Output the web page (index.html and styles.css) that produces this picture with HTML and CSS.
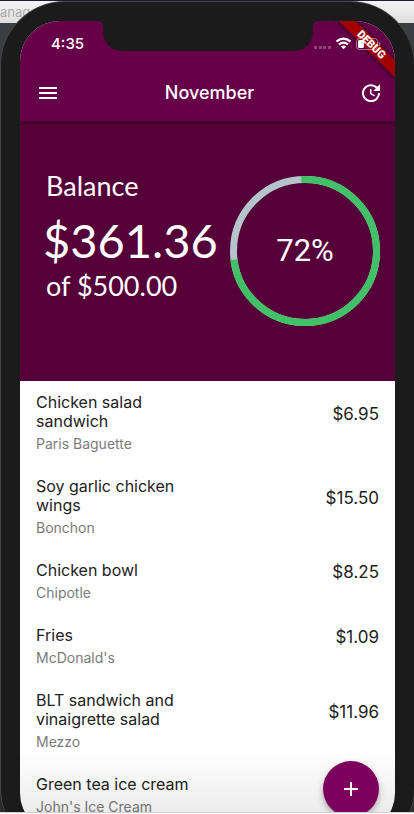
FILE: index.html
```html
<!DOCTYPE html>
<html lang="en">
<head>
<meta charset="utf-8">
<meta name="viewport" content="width=device-width, initial-scale=1">
<title>November</title>
<link rel="stylesheet" href="styles.css">
</head>
<body>
<div class="titlebar">anag</div>
<div class="phone">
  <div class="screen">
    <header class="top">
      <div class="status">
        <time class="clock">4:35</time>
        <svg class="notch" width="220" height="30" viewBox="0 0 220 30" aria-hidden="true"><path d="M0 0H220Q215 0 215 6V10Q214 29 195 30H25Q6 29 5 10V6Q5 0 0 0Z"/></svg>
        <svg class="signals" width="70" height="20" viewBox="0 0 70 20" aria-hidden="true">
          <g fill="#8f4379"><rect x="1" y="11" width="3" height="3"/><rect x="6" y="11" width="3" height="3"/><rect x="10" y="11" width="3" height="3"/><rect x="15" y="11" width="3" height="3"/></g>
          <g fill="none" stroke="#fff" stroke-width="2.2"><path d="M23.5 6.6Q30.500 .6 37.500 6.600"/><path d="M26 9.500Q30.500 5.800 35 9.500"/></g>
          <path d="M27.800 11.500Q30.500 9.500 33.200 11.500L30.500 14.300Z" fill="#fff"/>
          <rect x="43.500" y="3.500" width="21" height="11" rx="3" fill="none" stroke="#fff" stroke-opacity=".45"/><path d="M66.500 7V11" stroke="#a66b95" stroke-width="1.500"/>
          <rect x="45" y="5" width="6" height="8" rx="1.500" fill="#fff"/>
        </svg>
      </div>
      <div class="appbar">
        <button class="icon" aria-label="Menu"><svg width="24" height="24" viewBox="0 0 24 24"><path d="M3 18h18v-2H3v2zm0-5h18v-2H3v2zm0-7v2h18V6H3z"/></svg></button>
        <h1>November</h1>
        <button class="icon" aria-label="Update"><svg width="24" height="24" viewBox="0 0 24 24"><path d="M21 10.120h-6.780l2.740-2.820c-2.730-2.700-7.150-2.800-9.880-.1-2.730 2.710-2.730 7.080 0 9.790s7.150 2.710 9.880 0C18.320 15.650 19 14.080 19 12.100h2c0 1.980-.88 4.550-2.640 6.290-3.510 3.480-9.210 3.480-12.720 0-3.500-3.470-3.530-9.110-.02-12.580s9.140-3.470 12.650 0L21 3v7.120zM12.500 8v4.250l3.500 2.080-.72 1.210L11 13V8h1.500z"/></svg></button>
      </div>
    </header>
    <section class="summary">
      <div class="balance">
        <h2>Balance</h2>
        <p class="amount">$361.36</p>
        <p class="limit">of $500.00</p>
      </div>
      <div class="ring">
        <svg width="150" height="150" viewBox="0 0 150 150" aria-hidden="true">
          <circle cx="75" cy="75" r="71.500" fill="none" stroke="#b5c4cc" stroke-width="7"/>
          <circle cx="75" cy="75" r="71.500" fill="none" stroke="#41c166" stroke-width="7" pathLength="360" stroke-dasharray="266 94" transform="rotate(-93 75 75)"/>
        </svg>
        <span class="percent">72%</span>
      </div>
    </section>
    <ul class="list">
      <li><div class="item"><h3>Chicken salad sandwich</h3><p>Paris Baguette</p></div><span class="price">$6.95</span></li>
      <li><div class="item"><h3>Soy garlic chicken wings</h3><p>Bonchon</p></div><span class="price">$15.50</span></li>
      <li><div class="item"><h3>Chicken bowl</h3><p>Chipotle</p></div><span class="price">$8.25</span></li>
      <li><div class="item"><h3>Fries</h3><p>McDonald's</p></div><span class="price">$1.09</span></li>
      <li><div class="item"><h3>BLT sandwich and vinaigrette salad</h3><p>Mezzo</p></div><span class="price">$11.96</span></li>
      <li><div class="item"><h3>Green tea ice cream</h3><p>John's Ice Cream</p></div></li>
    </ul>
    <div class="fade"></div>
    <button class="fab" aria-label="Add"><svg width="24" height="24" viewBox="0 0 24 24"><path d="M19 13h-6v6h-2v-6H5v-2h6V5h2v6h6v2z"/></svg></button>
    <div class="banner">DEBUG</div>
  </div>
</div>
<div class="edge"></div>
</body>
</html>
```
FILE: styles.css
```css
* { box-sizing: border-box; }
body {
  position: relative;
  height: 100vh;
  margin: 0;
  padding: 2px 0 0 1px;
  overflow: hidden;
  background: linear-gradient(#3a4043 0, #343a3d 120px, #2b2b2b 121px, #2b2b2b 100%);
  font-family: Inter, sans-serif;
}
h1, h2, h3, p, ul { margin: 0; padding: 0; font-weight: 400; }
button { padding: 0; border: 0; background: none; cursor: pointer; }
svg { display: block; fill: currentColor; }
.titlebar {
  position: absolute;
  inset: 0 0 auto;
  height: 23px;
  border-top: 1px solid #211c2c;
  background: linear-gradient(#f4f4f4, #dedede);
  color: #aaa;
  font-size: 13px;
  line-height: 22px;
}
.phone {
  position: relative;
  border: 19px solid #1b1b1b;
  border-radius: 64px;
  background: #1b1b1b;
  box-shadow: 0 0 0 1px #444;
}
.screen {
  position: relative;
  aspect-ratio: 375 / 812;
  overflow: hidden;
  border-radius: 40px;
  background: #fff;
}
.top {
  position: relative;
  background: #660049;
  color: #fff;
  box-shadow: 0 1px 5px rgba(0, 0, 0, .5);
}
.status {
  display: flex;
  align-items: flex-start;
  justify-content: space-between;
  height: 44px;
  padding: 0 12px 0 31px;
}
.clock { margin-top: 14px; font-size: 15px; font-weight: 500; line-height: 18px; }
.notch {
  position: absolute;
  left: 50%;
  top: 0;
  margin-left: -110px;
  fill: #1b1b1b;
}
.signals { position: relative; z-index: 1; margin-top: 14px; }
.appbar {
  display: flex;
  align-items: center;
  justify-content: space-between;
  height: 56px;
  padding: 0 12px 0 16px;
}
.icon { color: #fff; }
h1 { font-size: 18px; font-weight: 500; line-height: 24px; }
.summary {
  display: flex;
  align-items: center;
  justify-content: space-between;
  height: 260px;
  padding: 0 15px 0 23px;
  background: #550039;
  color: #fff;
}
.balance { padding-bottom: 32px; font-family: Lato, sans-serif; }
.balance h2 { padding-left: 3px; font-size: 27px; line-height: 36px; }
.amount { margin-top: 6px; font-size: 47px; line-height: 60px; }
.limit { padding-left: 3px; font-size: 27px; line-height: 32px; }
.ring { display: grid; place-items: center; }
.ring > * { grid-area: 1 / 1; }
.percent { font-family: Roboto, sans-serif; font-size: 31px; line-height: 40px; }
.list { list-style: none; }
.list li {
  display: flex;
  align-items: center;
  justify-content: space-between;
  padding: 12px 16px 13px;
  color: #212121;
}
.item { width: 168px; }
.item h3 { font-size: 16px; line-height: 19px; }
.item p { margin-top: 4px; color: #7b7b7b; font-size: 14px; line-height: 17px; }
.price { padding-bottom: 18px; font-size: 17px; line-height: 20px; }
.fade {
  position: absolute;
  inset: auto 0 0;
  height: 84px;
  background: linear-gradient(rgba(0, 0, 0, 0), rgba(0, 0, 0, .1));
}
.fab {
  position: absolute;
  right: 16px;
  bottom: 16px;
  display: grid;
  place-items: center;
  width: 56px;
  height: 56px;
  border-radius: 50%;
  background: #7d005f;
  color: #fff;
  box-shadow: 0 3px 6px rgba(0, 0, 0, .3);
}
.banner {
  position: absolute;
  top: 18px;
  right: -21px;
  width: 90px;
  background: #a00000;
  color: #fff;
  box-shadow: 0 0 6px rgba(0, 0, 0, .6);
  font: 900 11px/12px Roboto, sans-serif;
  text-align: center;
  transform: rotate(45deg);
}
.edge {
  position: absolute;
  inset: auto 0 0;
  height: 2px;
  border-top: 1px solid #d0d0d0;
  background: #fff;
}
```
